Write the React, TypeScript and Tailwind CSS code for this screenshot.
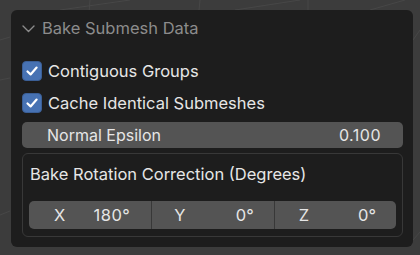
import React from "react";

const font = { fontFamily: "Inter, 'DejaVu Sans', sans-serif" };

function Check() {
  return (
    <div className="w-[20px] h-[20px] rounded-[4px] bg-[#4772b3] border border-[#3b5f96] flex items-center justify-center shrink-0">
      <svg width="14" height="14" viewBox="0 0 14 14" fill="none">
        <path d="M2.5 7.5 L5.6 10.4 L11.6 3.6" stroke="#ffffff" strokeWidth="2.2" strokeLinecap="round" strokeLinejoin="round" />
      </svg>
    </div>
  );
}

export default function App() {
  return (
    <div className="relative w-[420px] h-[255px] bg-[#3c3c3c] overflow-hidden" style={font}>
      <svg className="absolute inset-0" width="420" height="255" viewBox="0 0 420 255">
        <g stroke="#474747" strokeWidth="1" fill="none">
          <line x1="90" y1="0" x2="89" y2="12" />
          <line x1="60" y1="10" x2="130" y2="0" />
          <line x1="200" y1="0" x2="199" y2="10" />
          <line x1="235" y1="10" x2="300" y2="0" />
          <line x1="308" y1="0" x2="308" y2="10" />
          <line x1="370" y1="10" x2="405" y2="0" />
          <line x1="0" y1="40" x2="10" y2="37" />
          <line x1="0" y1="80" x2="10" y2="78" />
          <line x1="0" y1="215" x2="10" y2="211" />
          <line x1="413" y1="40" x2="420" y2="30" />
          <line x1="413" y1="240" x2="420" y2="232" />
        </g>
      </svg>
      <div className="absolute left-[11px] top-[10px] w-[402px] h-[237px] rounded-[6px] bg-[#1d1d1d] flex flex-col px-[11px]">
        <div className="h-[36px] flex items-center gap-[7px] text-[16.5px] text-[#8c8c8c]">
          <svg width="13" height="8" viewBox="0 0 13 8" fill="none" className="mt-[1px]">
            <path d="M1 1 L6.5 6.5 L12 1" stroke="#8c8c8c" strokeWidth="1.4" strokeLinecap="round" strokeLinejoin="round" />
          </svg>
          <span>Bake Submesh Data</span>
        </div>
        <div className="h-[9px]" />
        <div className="h-[32px] flex items-center gap-[6px] text-[16.5px] text-[#e6e6e6]">
          <Check />
          <span>Contiguous Groups</span>
        </div>
        <div className="h-[32px] flex items-center gap-[6px] text-[16.5px] text-[#e6e6e6]">
          <Check />
          <span>Cache Identical Submeshes</span>
        </div>
        <div className="mt-[3px] h-[26px] mr-[-1px] rounded-[5px] bg-[#545454] flex items-center justify-between pl-[25px] pr-[22px] text-[16px] text-[#e6e6e6]">
          <span>Normal Epsilon</span>
          <span className="tracking-[0.5px]">0.100</span>
        </div>
        <div className="mt-[5px] h-[84px] mr-[-1px] rounded-[6px] border border-[#383838] flex flex-col px-[6px]">
          <div className="h-[39px] flex items-center pl-[1px] pt-[1px] text-[16.5px] text-[#e6e6e6]">
            Bake Rotation Correction (Degrees)
          </div>
          <div className="mt-[8px] h-[28px] rounded-[5px] bg-[#545454] grid grid-cols-3 text-[16.5px] text-[#e6e6e6] overflow-hidden">
            <div className="flex items-center justify-between pl-[25px] pr-[21px]">
              <span>X</span>
              <span className="tracking-[0.5px]">180°</span>
            </div>
            <div className="flex items-center justify-between pl-[22px] pr-[20px] border-l border-[#383838]">
              <span>Y</span>
              <span>0°</span>
            </div>
            <div className="flex items-center justify-between pl-[24px] pr-[20px] border-l border-[#383838]">
              <span>Z</span>
              <span>0°</span>
            </div>
          </div>
        </div>
      </div>
    </div>
  );
}
